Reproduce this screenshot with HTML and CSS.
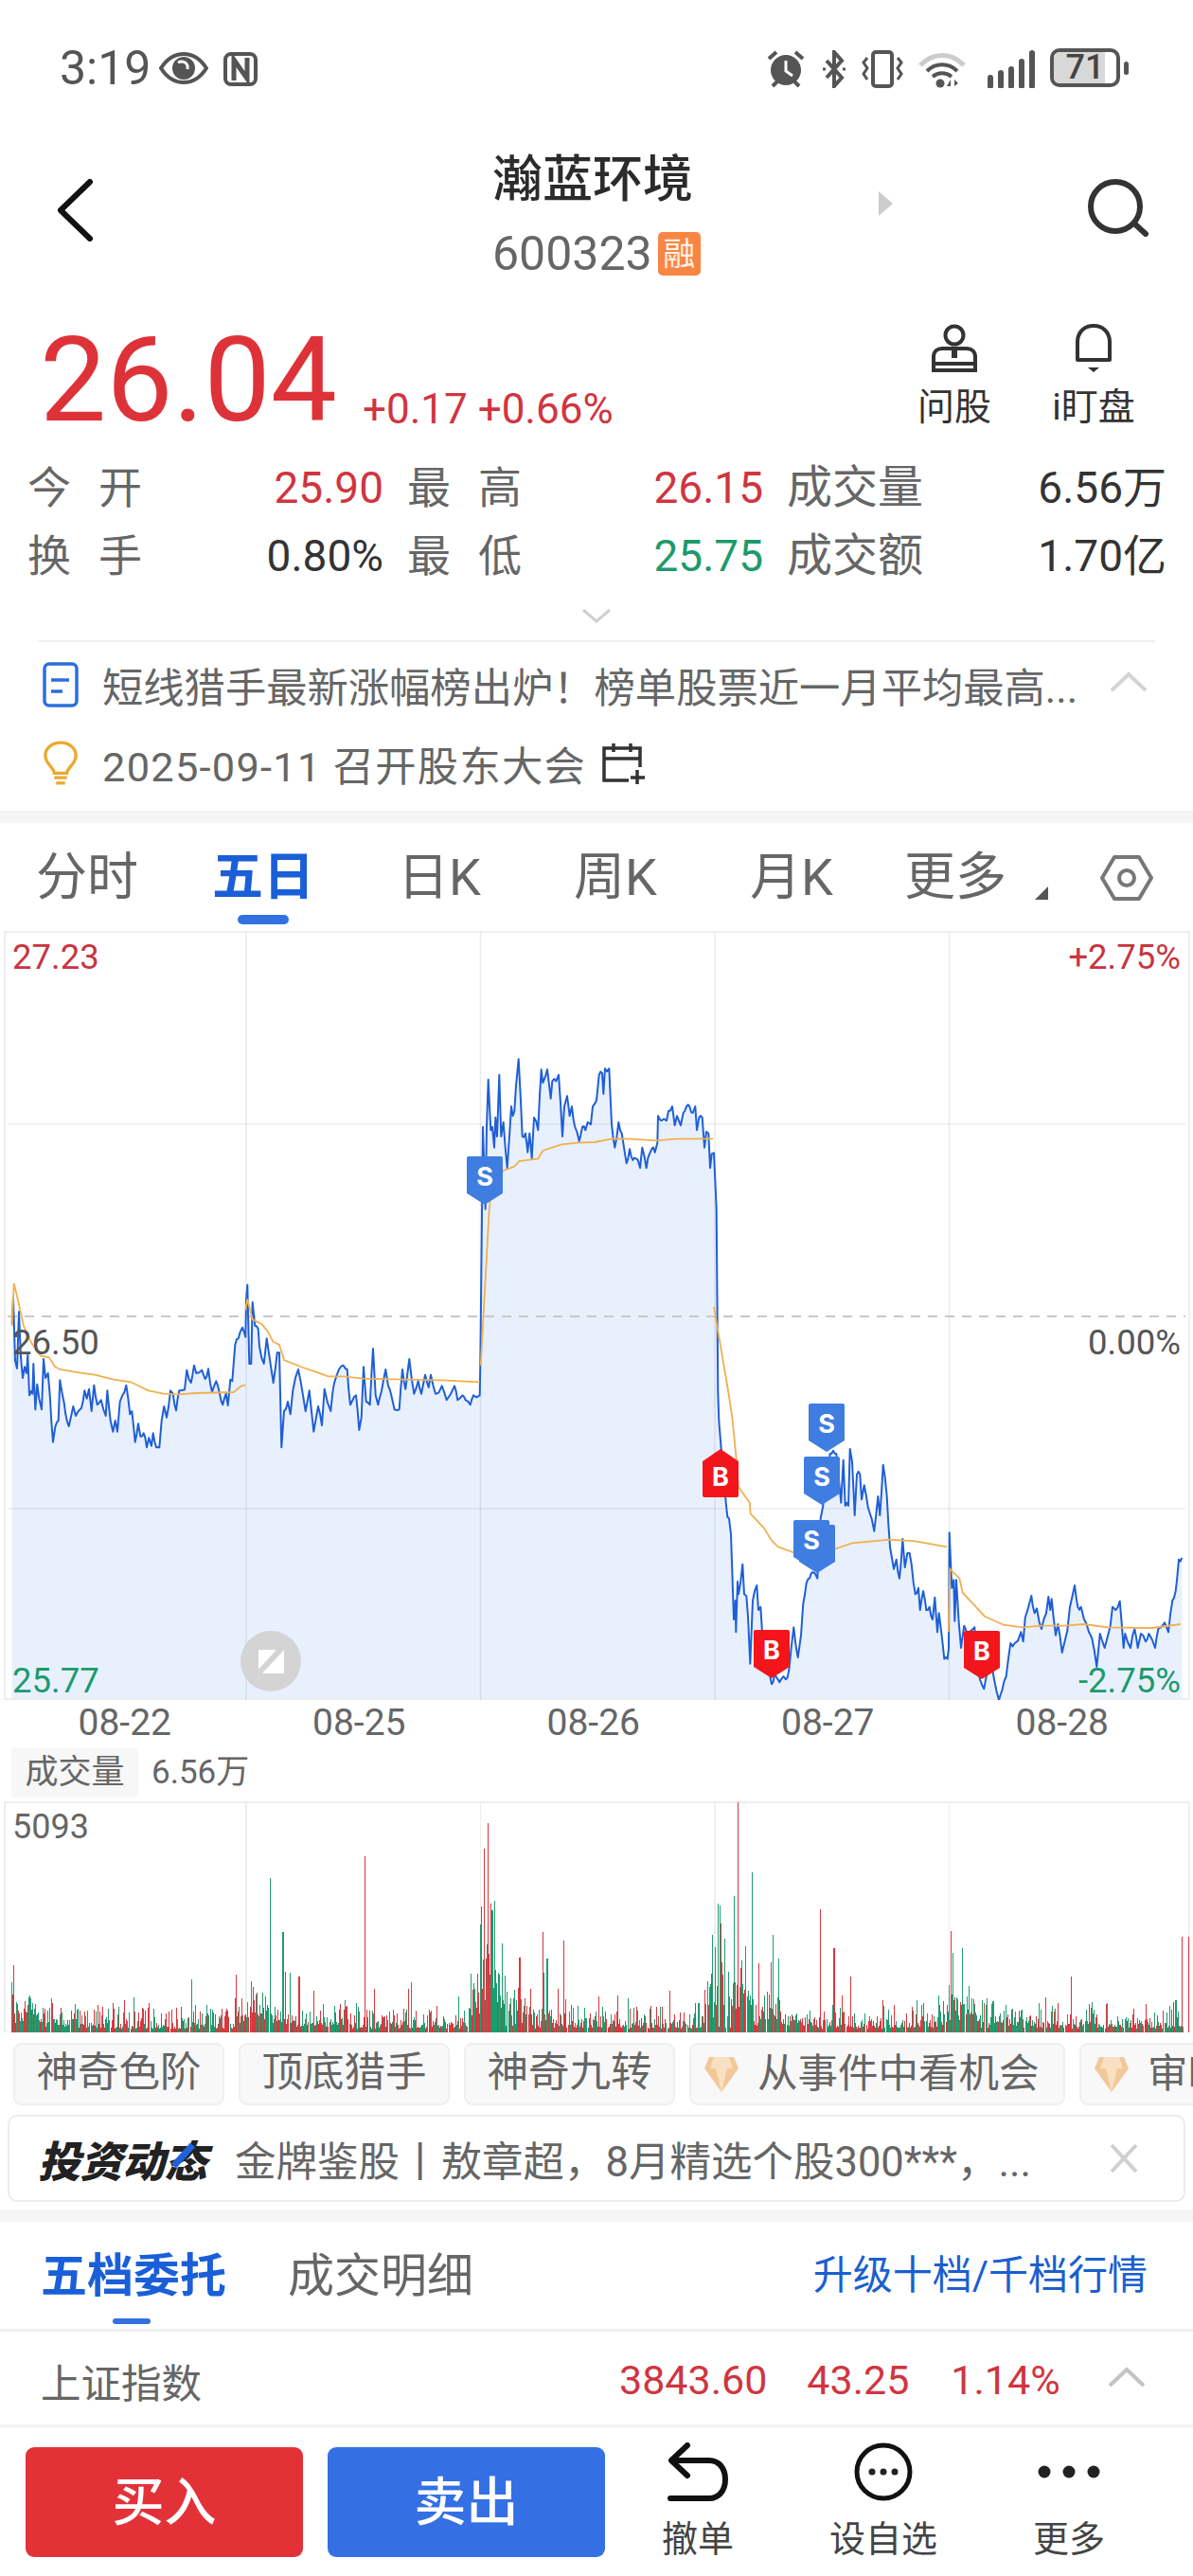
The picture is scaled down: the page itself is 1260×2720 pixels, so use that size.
FILE: index.html
```html
<!DOCTYPE html>
<html lang="zh-CN">
<head>
  <meta charset="UTF-8">
  <meta name="viewport" content="width=device-width, initial-scale=1.0">
  <title>瀚蓝环境</title>
  <link rel="stylesheet" href="styles.css">
</head>
<body>
  <div class="page">
    <div class="status_bar">
      <div class="status_left">
        <span class="clock">3:19</span>
        <svg class="ic_eye" viewBox="0 0 52 34"><path d="M2 17C9 6 17 2 26 2s17 4 24 15c-7 11-15 15-24 15S9 28 2 17z" fill="none" stroke="#555" stroke-width="4"/><circle cx="26" cy="17" r="12" fill="#555"/><path d="M20 11c6-3 11 1 10 7" fill="none" stroke="#fff" stroke-width="3"/></svg>
        <svg class="ic_nfc" viewBox="0 0 36 36"><rect x="2" y="2" width="32" height="32" rx="6" fill="none" stroke="#555" stroke-width="4"/><path d="M11 30V8l14 20V6" fill="none" stroke="#555" stroke-width="5"/></svg>
      </div>
      <div class="status_right">
        <svg class="ic_alarm" viewBox="0 0 42 40"><circle cx="21" cy="21" r="16" fill="#555"/><path d="M21 11v11l7 5" fill="none" stroke="#fff" stroke-width="3"/><path d="M3 9l8-7M39 9l-8-7M7 38l5-5M35 38l-5-5" stroke="#555" stroke-width="4"/></svg>
        <svg class="ic_bt" viewBox="0 0 26 40"><path d="M5 11l16 18-8 9V2l8 9L5 29" fill="none" stroke="#555" stroke-width="4"/><path d="M1 20h3M22 20h3" stroke="#555" stroke-width="3"/></svg>
        <svg class="ic_vibrate" viewBox="0 0 46 40"><rect x="13" y="2" width="20" height="36" rx="3" fill="none" stroke="#555" stroke-width="4"/><path d="M7 8l-4 5 4 6-4 6 4 6M39 8l4 5-4 6 4 6-4 6" fill="none" stroke="#555" stroke-width="3"/></svg>
        <svg class="ic_wifi" viewBox="0 0 50 40"><path d="M2 16c13-14 33-14 46 0" fill="none" stroke="#ccc" stroke-width="5"/><path d="M9 22c9-9 23-9 32 0M15 28c6-5 14-5 20 0" fill="none" stroke="#555" stroke-width="4"/><circle cx="23" cy="35" r="4.500" fill="#555"/><path d="M34 38v-7l-4 7zM38 31v7l4-3z" fill="#555"/></svg>
        <svg class="ic_signal" viewBox="0 0 50 40"><path d="M3 38v-9M14 38V24M25 38V20M36 38V12M47 38V3" stroke="#555" stroke-width="6" stroke-linecap="round"/></svg>
        <div class="battery"><div class="battery_level"></div><span>71</span></div>
        <div class="battery_tip"></div>
      </div>
    </div>

    <div class="title_bar">
      <svg class="ic_back" viewBox="0 0 40 66"><path d="M35 3L4 33l31 30" fill="none" stroke="#111" stroke-width="6" stroke-linecap="round" stroke-linejoin="round"/></svg>
      <div class="title_text">
        <div class="stock_name">瀚蓝环境</div>
        <div class="stock_code">600323<span class="rong">融</span></div>
      </div>
      <div class="next_arrow"></div>
      <svg class="ic_search" viewBox="0 0 70 64"><circle cx="33" cy="30" r="26" fill="none" stroke="#333" stroke-width="6"/><path d="M53 48l12 11" stroke="#333" stroke-width="6" stroke-linecap="round"/></svg>
    </div>

    <div class="quote_row">
      <span class="price">26.04</span>
      <span class="change">+0.17 +0.66%</span>
      <div class="quote_tools">
        <div class="quote_tool">
          <svg viewBox="0 0 50 52"><circle cx="25" cy="12" r="9.500" fill="none" stroke="#333" stroke-width="4"/><path d="M3 49V35c0-6 4-9 9-9h26c5 0 9 3 9 9v14zM3 42h44" fill="none" stroke="#333" stroke-width="4"/><path d="M25 28v8" stroke="#333" stroke-width="6"/></svg>
          <span>问股</span>
        </div>
        <div class="quote_tool">
          <svg viewBox="0 0 42 52"><path d="M4 38V19C4 9 11 2 21 2s17 7 17 17v19z" fill="none" stroke="#333" stroke-width="4" stroke-linejoin="round"/><path d="M15 46h12l-6 5z" fill="#333"/></svg>
          <span>i盯盘</span>
        </div>
      </div>
    </div>

    <div class="stats">
      <span class="stat_label spaced">今开</span><span class="stat_value up">25.90</span>
      <span class="stat_label spaced pad">最高</span><span class="stat_value up">26.15</span>
      <span class="stat_label pad wide">成交量</span><span class="stat_value">6.56万</span>
      <span class="stat_label spaced">换手</span><span class="stat_value">0.80%</span>
      <span class="stat_label spaced pad">最低</span><span class="stat_value down">25.75</span>
      <span class="stat_label pad wide">成交额</span><span class="stat_value">1.70亿</span>
    </div>
    <div class="expand_row">
      <svg viewBox="0 0 32 16"><path d="M2 2l14 12L30 2" fill="none" stroke="#d0d0d0" stroke-width="3"/></svg>
    </div>

    <div class="notice_box">
      <div class="notice_row">
        <svg class="ic_note" viewBox="0 0 38 48"><rect x="2" y="2" width="34" height="44" rx="5" fill="none" stroke="#2b6fdc" stroke-width="3.500"/><path d="M9 19h19M9 31h12" stroke="#2b6fdc" stroke-width="3.500"/></svg>
        <span class="notice_text">短线猎手最新涨幅榜出炉！榜单股票近一月平均最高...</span>
        <svg class="ic_fold" viewBox="0 0 40 22"><path d="M2 20L20 3l18 17" fill="none" stroke="#d4d4d4" stroke-width="4"/></svg>
      </div>
      <div class="notice_row">
        <svg class="ic_note" viewBox="0 0 40 50"><path d="M13 36c0-6-10-10-10-20C3 8 11 2 20 2s17 6 17 14c0 10-10 14-10 20z" fill="none" stroke="#eba92d" stroke-width="3.500"/><path d="M13 41h14M15 47h10" stroke="#eba92d" stroke-width="3.500"/></svg>
        <span class="notice_text">2025-09-11 召开股东大会</span>
        <svg class="ic_calendar" viewBox="0 0 48 46"><path d="M30 41H4V7h38v20M4 18h38M14 2v9M32 2v9" fill="none" stroke="#333" stroke-width="3.500"/><path d="M39 30v15M32 38h15" stroke="#333" stroke-width="3.500"/></svg>
      </div>
    </div>
    <div class="gray_band"></div>

    <div class="period_tabs">
      <span class="period">分时</span>
      <span class="period active">五日</span>
      <span class="period">日K</span>
      <span class="period">周K</span>
      <span class="period">月K</span>
      <span class="period more">更多<i class="more_mark"></i></span>
      <svg class="ic_setting" viewBox="0 0 56 50"><path d="M15 3h26l13 22-13 22H15L2 25z" fill="none" stroke="#777" stroke-width="4" stroke-linejoin="round"/><circle cx="28" cy="25" r="8" fill="none" stroke="#777" stroke-width="4"/></svg>
    </div>

    <svg class="price_chart" id="price_chart" viewBox="0 983 1260 812"></svg>
    <div class="date_axis">
      <span>08-22</span><span>08-25</span><span>08-26</span><span>08-27</span><span>08-28</span>
    </div>
    <div class="vol_head"><span class="vol_tag">成交量</span><span>6.56万</span></div>
    <svg class="vol_chart" id="vol_chart" viewBox="0 1902 1260 244"></svg>

    <div class="chip_row">
      <span class="chip">神奇色阶</span>
      <span class="chip">顶底猎手</span>
      <span class="chip">神奇九转</span>
      <span class="chip gem_chip">
        <svg class="ic_gem" viewBox="0 0 36 38"><path d="M5 1h26l5 12-18 25L0 13z" fill="#f3c899"/><path d="M10 1h16l4 12H6zM12 13h12l-6 25z" fill="#f9e0c2"/></svg>从事件中看机会
      </span>
      <span class="chip gem_chip last">
        <svg class="ic_gem" viewBox="0 0 36 38"><path d="M5 1h26l5 12-18 25L0 13z" fill="#f3c899"/><path d="M10 1h16l4 12H6zM12 13h12l-6 25z" fill="#f9e0c2"/></svg>审时度势
      </span>
    </div>

    <div class="invest_card">
      <span class="invest_logo">投资动态<i class="logo_slash"></i></span>
      <span class="invest_text">金牌鉴股丨敖章超，8月精选个股300***，...</span>
      <svg class="ic_close" viewBox="0 0 32 34"><path d="M3 3l26 28M29 3L3 31" stroke="#d0d0d0" stroke-width="4"/></svg>
    </div>
    <div class="gray_band band_low"></div>

    <div class="depth_tabs">
      <span class="depth_tab active">五档委托</span>
      <span class="depth_tab">成交明细</span>
      <span class="upgrade">升级十档/千档行情</span>
    </div>
    <div class="index_row">
      <span class="index_name">上证指数</span>
      <span class="index_val first">3843.60</span>
      <span class="index_val second">43.25</span>
      <span class="index_val third">1.14%</span>
      <svg class="ic_fold" viewBox="0 0 40 22"><path d="M2 20L20 3l18 17" fill="none" stroke="#c4c4c4" stroke-width="4"/></svg>
    </div>

    <div class="bottom_bar">
      <div class="trade_btn buy">买入</div>
      <div class="trade_btn sell">卖出</div>
      <div class="bottom_action">
        <svg viewBox="0 0 66 62"><path d="M22 3L5 19l17 16M5 19h40c10 0 17 8 17 20s-7 20-17 20H4" fill="none" stroke="#111" stroke-width="6" stroke-linecap="round" stroke-linejoin="round"/></svg>
        <span>撤单</span>
      </div>
      <div class="bottom_action">
        <svg viewBox="0 0 66 62"><circle cx="33" cy="31" r="28" fill="none" stroke="#111" stroke-width="5"/><circle cx="21" cy="31" r="3.500" fill="#222"/><circle cx="33" cy="31" r="3.500" fill="#222"/><circle cx="45" cy="31" r="3.500" fill="#222"/></svg>
        <span>设自选</span>
      </div>
      <div class="bottom_action">
        <svg viewBox="0 0 66 62"><circle cx="7" cy="31" r="6.500" fill="#222"/><circle cx="33" cy="31" r="6.500" fill="#222"/><circle cx="59" cy="31" r="6.500" fill="#222"/></svg>
        <span>更多</span>
      </div>
    </div>
  </div>
  <script src="chart.js"></script>
</body>
</html>
```

FILE: styles.css
```css
*{
  box-sizing: border-box;
}
body{
  margin: 0;
  background-color: white;
  font-family: Roboto, "Noto Sans CJK SC", sans-serif;
  color: #666;
}
.page{
  width: 1260px;
  height: 2720px;
  overflow: hidden;
}
svg{
  display: block;
  flex-shrink: 0;
}

/* status bar */
.status_bar{
  height: 130px;
  padding: 51px 68px 0 63px;
  display: flex;
  justify-content: space-between;
}
.status_left,.status_right{
  display: flex;
  align-items: flex-start;
  height: 42px;
}
.clock{
  font-size: 50px;
  line-height: 42px;
  color: #555;
}
.ic_eye{
  width: 52px;
  height: 34px;
  margin: 4px 0 0 9px;
}
.ic_nfc{
  width: 36px;
  height: 36px;
  margin: 4px 0 0 16px;
}
.ic_alarm{
  width: 42px;
  height: 40px;
  margin: 2px 3px 0 0;
}
.ic_bt{
  width: 26px;
  height: 40px;
  margin: 2px 0 0 14px;
}
.ic_vibrate{
  width: 46px;
  height: 40px;
  margin: 2px 0 0 15px;
}
.ic_wifi{
  width: 50px;
  height: 40px;
  margin: 2px 0 0 15px;
}
.ic_signal{
  width: 50px;
  height: 40px;
  margin: 2px 0 0 23px;
}
.battery{
  position: relative;
  width: 74px;
  height: 41px;
  margin-left: 16px;
  border: 4px solid #555;
  border-radius: 10px;
  overflow: hidden;
  text-align: center;
  font-size: 36px;
  font-weight: 500;
  line-height: 33px;
  color: #444;
}
.battery span{
  position: relative;
}
.battery_level{
  position: absolute;
  left: 0;
  top: 0;
  width: 54px;
  height: 100%;
  background-color: #d8d8d8;
}
.battery_tip{
  width: 5px;
  height: 14px;
  margin: 14px 0 0 4px;
  border-radius: 3px;
  background-color: #555;
}

/* name and code */
.title_bar{
  height: 180px;
  padding: 0 44px 0 60px;
  display: flex;
  align-items: center;
}
.ic_back{
  width: 40px;
  height: 66px;
  margin-top: 4px;
}
.title_text{
  width: 220px;
  margin: 16px 0 0 420px;
  white-space: nowrap;
}
.stock_name{
  height: 80px;
  font-size: 53px;
  font-weight: 500;
  line-height: 80px;
  color: #2b2b2b;
}
.stock_code{
  height: 76px;
  display: flex;
  align-items: center;
  font-size: 50px;
  color: #666;
}
.rong{
  width: 47px;
  height: 46px;
  margin-left: 6px;
  border-radius: 5px;
  background-color: #f98545;
  color: #fff3e6;
  font-size: 34px;
  line-height: 46px;
  text-align: center;
}
.next_arrow{
  width: 0;
  height: 0;
  margin: -10px 0 0 188px;
  border-top: 13px solid transparent;
  border-bottom: 13px solid transparent;
  border-left: 15px solid #ccc;
}
.ic_search{
  width: 70px;
  height: 64px;
  margin: 0 0 0 202px;
}

/* price line */
.quote_row{
  height: 169px;
  padding-left: 42px;
  display: flex;
  align-items: flex-start;
}
.price{
  width: 341px;
  height: 160px;
  font-size: 125px;
  line-height: 160px;
  margin-top: 12px;
  color: #de3239;
}
.change{
  margin-top: 92px;
  font-size: 44px;
  line-height: 60px;
  color: #d0353f;
  white-space: nowrap;
}
.quote_tools{
  margin: 32px 0 0 auto;
  padding-right: 62px;
  display: flex;
  gap: 61px;
}
.quote_tool{
  width: 86px;
  display: flex;
  flex-direction: column;
  align-items: center;
  color: #333;
  font-size: 39px;
  line-height: 58px;
  white-space: nowrap;
}
.quote_tool svg{
  width: 50px;
  height: 52px;
  margin-bottom: 7px;
}

/* today's numbers */
.stats{
  height: 144px;
  padding-left: 29px;
  display: grid;
  grid-template-columns: 120px 256px 120px 281px 171px 255px;
  grid-auto-rows: 72px;
  font-size: 46px;
  line-height: 72px;
  white-space: nowrap;
}
.spaced{
  letter-spacing: 29px;
}
.pad{
  padding-left: 25px;
}
.wide{
  font-size: 48px;
}
.stat_value{
  text-align: right;
  color: #333;
}
.stat_value.up{
  color: #d0353f;
}
.stat_value.down{
  color: #1d9a6c;
}
.expand_row{
  height: 53px;
  display: flex;
  justify-content: center;
  align-items: center;
}
.expand_row svg{
  width: 32px;
  height: 16px;
}
.notice_box{
  margin: 0 40px;
  height: 182px;
  border-top: 2px solid #f0f0f0;
  padding-top: 3px;
}
.notice_row{
  height: 83px;
  display: flex;
  align-items: center;
}
.ic_note{
  width: 38px;
  height: 48px;
  margin-left: 5px;
}
.notice_text{
  margin-left: 25px;
  font-size: 43.300px;
  color: #666;
  white-space: nowrap;
  width: 1064px;
}
.notice_row:last-child .notice_text{
  width: auto;
  letter-spacing: 1.300px;
}
.ic_calendar{
  width: 48px;
  height: 46px;
  margin-left: 15px;
}
.ic_fold{
  width: 40px;
  height: 22px;
}
.notice_row .ic_fold{
  margin-top: -6px;
}
.gray_band{
  height: 13px;
  margin-top: -2px;
  background-color: #f5f5f5;
}

/* period tabs */
.period_tabs{
  height: 114px;
  display: flex;
  align-items: flex-start;
}
.period{
  width: 184px;
  margin-right: 2px;
  padding-top: 25px;
  text-align: center;
  font-size: 54px;
  line-height: 66px;
  color: #666;
  position: relative;
}
.period.active{
  color: #1a5fd8;
  font-weight: 700;
}
.period.active::after{
  content: "";
  position: absolute;
  left: 65px;
  top: 97px;
  width: 54px;
  height: 10px;
  border-radius: 5px;
  background-color: #3371e0;
}
.period.more{
  padding-right: 26px;
  text-align: center;
}
.more_mark{
  position: absolute;
  right: 7px;
  top: 67px;
  width: 0;
  height: 0;
  border-bottom: 14px solid #555;
  border-left: 14px solid transparent;
}
.ic_setting{
  width: 56px;
  height: 50px;
  margin: 33px 0 0 46px;
}

/* charts */
.price_chart{
  width: 1260px;
  height: 812px;
}
.date_axis{
  height: 51px;
  padding-left: 8px;
  display: flex;
  font-size: 39px;
  line-height: 49px;
  color: #666;
}
.date_axis span{
  width: 247.500px;
  text-align: center;
}
.vol_head{
  height: 56px;
  padding-left: 12px;
  display: flex;
  align-items: flex-start;
  font-size: 35px;
  line-height: 52px;
  color: #666;
}
.vol_tag{
  width: 134px;
  height: 52px;
  margin-right: 14px;
  border-radius: 4px;
  background-color: #f7f7f7;
  text-align: center;
}
.vol_chart{
  width: 1260px;
  height: 244px;
}
.vol_chart line{
  shape-rendering: crispEdges;
}

/* function chips */
.chip_row{
  height: 76px;
  margin-top: 11px;
  padding-left: 14px;
  display: flex;
  gap: 15px;
  overflow: hidden;
}
.chip{
  flex: none;
  width: 223px;
  height: 66px;
  border: 2px solid #efefef;
  border-radius: 9px;
  background-color: #f8f8f8;
  text-align: center;
  font-size: 43.500px;
  line-height: 60px;
  color: #666;
  white-space: nowrap;
}
.gem_chip{
  width: 397px;
  display: flex;
  align-items: center;
  padding-left: 14px;
  font-size: 42.500px;
}
.gem_chip.last{
  width: 300px;
}
.ic_gem{
  width: 36px;
  height: 38px;
  margin-right: 20px;
}

/* advert card */
.invest_card{
  height: 92px;
  margin: 0 8px;
  padding-left: 30px;
  border: 2px solid #ececec;
  border-radius: 10px;
  display: flex;
  align-items: center;
  white-space: nowrap;
}
.invest_logo{
  position: relative;
  width: 181px;
  font-size: 45px;
  font-weight: 900;
  font-style: italic;
  letter-spacing: -.500px;
  color: #222;
}
.logo_slash{
  position: absolute;
  left: 150px;
  top: 14px;
  width: 7px;
  height: 30px;
  background-color: #1f62dc;
  transform: rotate(42deg);
}
.invest_text{
  width: 923px;
  margin-left: 27px;
  font-size: 43.500px;
  color: #666;
}
.ic_close{
  width: 32px;
  height: 34px;
}
.band_low{
  margin-top: 8px;
}

/* order book tabs */
.depth_tabs{
  height: 116px;
  padding: 0 48px 8px 43px;
  border-bottom: 3px solid #f2f2f2;
  display: flex;
  align-items: center;
  white-space: nowrap;
}
.depth_tab{
  position: relative;
  margin-right: 65px;
  font-size: 49px;
  color: #666;
}
.depth_tab.active{
  font-weight: 700;
  color: #1a5fd8;
}
.depth_tab.active::after{
  content: "";
  position: absolute;
  left: 76px;
  top: 85px;
  width: 40px;
  height: 6px;
  border-radius: 3px;
  background-color: #3371e0;
}
.upgrade{
  margin-left: auto;
  font-size: 42px;
  color: #1a5fd0;
}
.index_row{
  height: 101px;
  padding: 4px 0 0 43px;
  border-bottom: 3px solid #f2f2f2;
  display: flex;
  align-items: center;
  white-space: nowrap;
  font-size: 43px;
  color: #d0353f;
}
.index_name{
  width: 611px;
  font-size: 42.500px;
  color: #666;
}
.index_val.second{
  margin-left: 42px;
}
.index_val.third{
  margin-left: 44px;
}
.index_row .ic_fold{
  margin: -6px 0 0 50px;
}

/* trade bar */
.bottom_bar{
  height: 157px;
  padding: 21px 0 0 27px;
  display: flex;
  align-items: flex-start;
}
.trade_btn{
  width: 293px;
  height: 116px;
  margin-right: 26px;
  border-radius: 9px;
  text-align: center;
  font-size: 55px;
  font-weight: 500;
  line-height: 116px;
  color: white;
}
.buy{
  background-color: #e23238;
}
.sell{
  margin-right: 0;
  background-color: #3470e4;
}
.bottom_action{
  width: 196px;
  margin-top: -5px;
  display: flex;
  flex-direction: column;
  align-items: center;
  font-size: 38px;
  line-height: 50px;
  color: #444;
}
.bottom_action svg{
  width: 66px;
  height: 62px;
  margin-bottom: 15px;
}
```

FILE: chart.js
```js
const NS = 'http://www.w3.org/2000/svg'
const BOTTOM = 1795

// price and average traces, in thirds of a pixel from each origin
const price_parts = [
  [0, 1340, [38,175,42,90,48,290,54,315,60,135,66,280,72,345,78,310,84,330,88,270,93,400,103,395,106,300,112,445,118,365,124,410,132,445,138,285,144,345,152,330,158,400,168,548,175,500,185,480,190,352,198,400,208,460,218,498,232,435,240,465,258,440,268,385,275,410,282,380,290,450,298,368,308,430,320,415,335,465,340,385,350,480,358,515,365,480,372,515,380,420,388,400,400,368,412,460,418,450,428,548,438,490,445,530,455,520,465,565,472,535,480,560,485,520,495,565,505,565,512,480,520,435,528,470,540,385,548,395,558,448,568,385,585,382,592,320,605,360,615,305,622,330,640,320,650,348,660,316,672,390,685,355,695,390,706,430,716,395,722,432,730,350,736,355,745,240,755,220,768,185,778,215,
    780,100,784,50,790,300,796,300,800,105,808,180,818,190,822,245,836,300,845,220,866,360,878,265,885,265,892,565,900,450,912,420,920,460,928,385,945,318,960,400,968,450,980,385,994,515,1008,435,1020,495,1028,380,1048,450,1058,365,1074,318,1088,305,1100,318,1110,430,1122,405,1128,400,1138,510,1145,470,1152,310,1160,420,1172,430,1182,252,1190,400,1198,430,1208,390,1222,318,1230,370,1240,400,1250,445,1265,445,1275,318,1285,380,1297,285,1312,395,1325,355,1335,395,1347,335,1358,375,1365,335,1380,395,1400,370,1415,415,1440,370,1450,415,1465,400,1475,415,1490,430,1500,400,1520,400,1522,300]],
  [500, 1100, [30,270,38,530,42,270,47,120,55,280,60,270,66,335,70,240,75,300,82,105,88,300,95,255,107,400,115,285,120,205,125,235,130,220,135,140,143,55,155,300,165,290,172,350,178,290,185,370,192,240,205,280,210,170,215,88,220,130,228,110,234,88,245,180,250,125,262,125,270,105,282,300,288,205,297,172,305,235,312,205,322,270,335,315,345,270,355,280,362,255,372,262,378,205,390,185,398,105,408,100,412,165,417,85,430,85,438,260,448,335,460,255,470,290,477,335,485,385,495,340,505,375,515,370,528,400,535,335,548,400,558,355,565,340,575,350,583,320,585,235,595,250,612,250,618,220,630,205,638,265,645,235,657,265,665,225,675,205,685,205,695,225,703,205,708,280,715,240,725,240,732,335,738,285,745,290,750,400,755,355,762,352,770,530]],
  [740, 1470, [55,0,58,90,65,180,80,350,85,395,90,400,96,450,105,720,110,660,112,760,117,600,120,640,133,545,138,640,145,645,150,710,157,860,165,660,178,612,183,690,190,680,195,760,205,850,225,925,235,890,245,910,255,910,270,910,280,880,295,745,308,840,318,770,325,670,335,605,345,590,355,570,370,590,380,400,388,360,400,250,410,195,420,185,430,195,445,350,452,215,458,360,468,360,473,180,480,220,488,390,495,260,505,260,510,340,518,295,525,330,535,380,550,440,562,330,568,390,578,230,590,330,600,490,605,520,612,560,620,530,630,590,640,465,647,555,655,510,662,510,668,545,680,640,690,620,695,690,705,630,715,690,725,680,735,720,742,650,750,760,755,700,765,780,772,845,782,845,786,810]],
  [990, 1600, [38,55,46,230,52,205,55,335,60,205,68,340,75,420,85,350,100,370,118,355,125,480,135,520,148,550,155,510,170,470,180,520,195,585,205,555,218,510,232,405,245,405,265,370,272,400,278,325,298,255,308,310,315,295,330,360,345,310,352,258,358,300,362,265,375,380,382,345,395,435,412,365,420,290,435,222,445,290,455,290,465,330,480,370,490,390,505,480,515,375,530,420,548,350,555,290,565,300,578,272,590,420,595,375,612,420,625,360,635,420,645,375,660,400,670,375,690,420,700,360,720,340,732,370,745,270,755,240,765,140,775,135]]
]
const avg_parts = [
  [0, 1340, [38,180,44,45,55,90,75,180,100,235,130,275,155,280,175,310,190,318,250,328,300,335,360,350,415,358,470,385,520,395,560,397,620,393,740,390,765,370,778,368]],
  [0, 1340, [778,130,784,95,800,160,830,175,850,200,865,230,885,240,900,288,960,312,1000,325,1040,340,1090,340,1150,347,1280,350,1400,352,1520,358]],
  [500, 1100, [23,1025,30,900,50,530,60,440,95,408,130,395,145,378,205,370,220,345,250,335,280,325,330,320,385,318,440,307,500,308,580,313,640,308,760,307]],
  [740, 1470, [42,-270,88,0,100,80,112,200,120,300,155,350,158,385,200,430,225,470,245,490,295,508,430,495,480,478,600,467,680,472,780,490]],
  [990, 1600, [35,370,40,170,70,200,80,245,150,320,210,347,270,355,330,350,400,350,465,345,540,355,680,357,770,345]]
]

// tallest volume bars as x, top
const tall_bars = [
  [18,675,1],[40,780,0],[68,780,0],[142,815,0],[176,778,0],[195,810,1],[252,720,0],[310,705,1],[330,725,0],[318,780,1],[355,398,0],[372,570,0],[375,695,1],[381,700,0],[393,710,1],[412,755,1],[453,785,0],
  [480,330,1],[492,750,1],[541,730,0],[537,750,1],[603,775,0],[636,305,1],[641,225,1],[645,480,1],[650,470,0],[647,500,0],[660,605,0],[655,700,0],[683,650,1],[713,570,1],[719,655,0],[715,700,0],[741,598,1],[733,750,1],
  [812,770,1],[787,775,1],[825,780,0],[880,755,1],[918,795,0],[936,580,0],[946,485,0],[952,590,0],[965,455,0],[970,160,1],[988,380,0],[980,615,0],[975,660,0],[1016,578,0],[997,670,1],[1013,665,1],[1023,655,0],
  [1078,498,1],[1096,620,1],[1118,710,1],[1107,770,1],[1160,785,1],[1205,785,0],[1233,770,0],[1250,568,1],[1252,635,0],[1265,622,0],[1273,740,0],[1297,780,0],[1305,790,0],[1374,778,1],[1408,712,1],[1390,795,1],[1455,795,0],[1553,585,1],[1562,585,1],[1545,785,0]
]
const vol_bursts = [[12,30],[260,40],[507,120],[755,130],[1002,50]]

let seed = 7
function rand(){
  seed = (seed * 16807) % 2147483647
  return seed / 2147483647
}
function add(parent, tag, attrs, text){
  let el = document.createElementNS(NS, tag)
  for (let key in attrs) el.setAttribute(key, attrs[key])
  if (text) el.textContent = text
  parent.appendChild(el)
  return el
}
function to_points(parts, wiggle){
  let points = []
  parts.forEach(function(part){
    let list = part[2]
    for (let i = 0; i < list.length; i += 2){
      let x = part[0] + list[i] / 3
      let y = part[1] + list[i + 1] / 3
      if (wiggle && points.length){
        let prev = points[points.length - 1]
        if (x - prev[0] > 3){
          points.push([(x + prev[0]) / 2, (y + prev[1]) / 2 + (rand() - 0.5) * 7])
        }
      }
      points.push([x, Math.min(y, BOTTOM)])
    }
  })
  return points
}
function line_d(points){
  return 'M' + points.map(p => p[0].toFixed(1) + ' ' + p[1].toFixed(1)).join('L')
}
function v_grid(svg, top, bottom, color){
  [260, 507.5, 755, 1002.5].forEach(function(x){
    add(svg, 'line', {x1: x, x2: x, y1: top, y2: bottom, stroke: color, 'stroke-width': 1.5})
  })
}
function frame(svg, top, bottom){
  add(svg, 'path', {d: `M5 ${bottom}V${top}H1256V${bottom}`, fill: 'none', stroke: '#eee', 'stroke-width': 2})
  add(svg, 'line', {x1: 5, x2: 1256, y1: bottom - 1, y2: bottom - 1, stroke: '#eee', 'stroke-width': 2})
}
function flag(svg, x, top, color, up){
  let d = up
    ? `M${x} ${top}l19 13v36a2 2 0 0 1-2 2h-34a2 2 0 0 1-2-2v-36z`
    : `M${x - 17} ${top}h34a2 2 0 0 1 2 2v37l-19 12-19-12v-37a2 2 0 0 1 2-2z`
  add(svg, 'path', {d: d, fill: color})
}
function marker(svg, x, top, kind, up){
  flag(svg, x, top, kind === 'B' ? '#f4151c' : '#3f7de0', up)
  add(svg, 'text', {x: x, y: top + (up ? 39 : 31), 'text-anchor': 'middle', fill: '#fff', 'font-family': 'Inter, sans-serif', 'font-size': 27, 'font-weight': 700}, kind)
}
function label(svg, x, y, text, color, anchor){
  add(svg, 'text', {x: x, y: y, fill: color, 'font-family': 'Roboto, sans-serif', 'font-size': 36.5, 'text-anchor': anchor || 'start'}, text)
}

function draw_price(){
  let svg = document.getElementById('price_chart')
  let points = to_points(price_parts, true)
  let first = points[0][0]
  let last = points[points.length - 1][0]
  add(svg, 'path', {d: line_d(points) + `L${last} ${BOTTOM}L${first} ${BOTTOM}Z`, fill: '#e8f0fe'})

  frame(svg, 984, BOTTOM)
  ;[1187, 1593].forEach(function(y){
    add(svg, 'line', {x1: 8, x2: 1252, y1: y, y2: y, stroke: '#000', 'stroke-opacity': 0.05, 'stroke-width': 2})
  })
  v_grid(svg, 985, BOTTOM, 'rgba(0,0,40,.08)')
  add(svg, 'line', {x1: 8, x2: 1252, y1: 1390, y2: 1390, stroke: '#c8c8c8', 'stroke-width': 2, 'stroke-dasharray': '10 8'})

  add(svg, 'path', {d: line_d(points), fill: 'none', stroke: '#1f5fd6', 'stroke-width': 2, 'stroke-linejoin': 'round'})
  avg_parts.forEach(function(part){
    add(svg, 'path', {d: line_d(to_points([part], false)), fill: 'none', stroke: '#f0b050', 'stroke-width': 1.8})
  })

  // round badge sitting on the chart
  add(svg, 'circle', {cx: 286, cy: 1754, r: 32, fill: '#d4d4d4'})
  add(svg, 'rect', {x: 273, y: 1742, width: 27, height: 25, fill: '#fff'})
  add(svg, 'path', {d: 'M298 1740l-26 28', stroke: '#d4d4d4', 'stroke-width': 6})

  marker(svg, 512, 1221, 'S')
  marker(svg, 873, 1482, 'S')
  marker(svg, 868, 1538, 'S')
  // two sells on nearly the same spot, only the front one shows its letter
  flag(svg, 863, 1610, '#3f7de0')
  marker(svg, 857, 1605, 'S')
  marker(svg, 761, 1530, 'B', true)
  marker(svg, 815, 1721, 'B')
  marker(svg, 1037, 1722, 'B')

  label(svg, 13, 1023, '27.23', '#c8353f')
  label(svg, 1247, 1023, '+2.75%', '#c8353f', 'end')
  label(svg, 13, 1430, '26.50', '#555')
  label(svg, 1247, 1430, '0.00%', '#555', 'end')
  label(svg, 13, 1787, '25.77', '#1d9a6c')
  label(svg, 1247, 1787, '-2.75%', '#1d9a6c', 'end')
}

function draw_volume(){
  let svg = document.getElementById('vol_chart')
  frame(svg, 1903, 2147)
  v_grid(svg, 1904, 2146, '#eee')
  for (let x = 12; x < 1250; x += 1.05){
    let height = 4 + rand() * rand() * 32
    vol_bursts.forEach(function(burst){
      let past = x - burst[0]
      if (past >= 0) height += rand() * burst[1] * Math.exp(-past / 28)
      else if (past > -12) height += rand() * burst[1] * 0.4
    })
    add(svg, 'line', {x1: x, x2: x, y1: 2146, y2: 2146 - height, stroke: rand() > 0.5 ? '#d9363e' : '#1f9c6e', 'stroke-width': 1})
  }
  tall_bars.forEach(function(bar){
    let x = bar[0] / 1.244
    add(svg, 'line', {x1: x, x2: x, y1: 2146, y2: 1850 + bar[1] / 3, stroke: bar[2] ? '#d9363e' : '#1f9c6e', 'stroke-width': 1.2})
  })
  add(svg, 'text', {x: 13, y: 1941, fill: '#666', 'font-family': 'Roboto, sans-serif', 'font-size': 36}, '5093')
}

draw_price()
draw_volume()
```
